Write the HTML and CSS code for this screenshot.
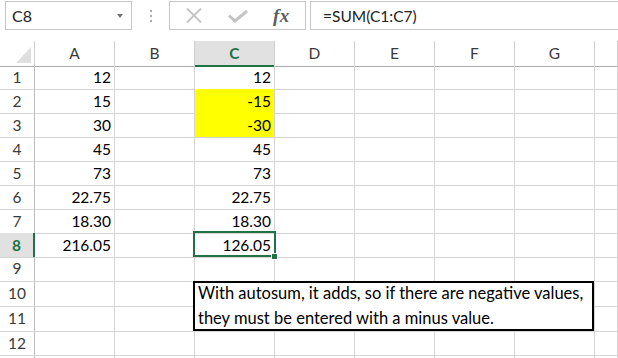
FILE: index.html
```html
<!DOCTYPE html>
<html>
<head>
<meta charset="utf-8">
<link rel="stylesheet" href="styles.css">
</head>
<body>
<div class="app">
  <div class="fbar">
    <div class="namebox"><span class="nb-text">C8</span><span class="nb-arrow"></span></div>
    <div class="grip"><i></i><i></i><i></i></div>
    <div class="fxbox">
      <svg class="ic-x" width="16" height="15" viewBox="0 0 16 15"><path d="M1 0.5 L15 14.5 M15 0.5 L1 14.5" stroke="#c3c3c3" stroke-width="1.8" fill="none"/></svg>
      <svg class="ic-ok" width="20" height="13" viewBox="0 0 20 13"><path d="M1 5.5 L7 11 L19 1" stroke="#c3c3c3" stroke-width="3" fill="none"/></svg>
      <span class="fx">fx</span>
    </div>
    <div class="finput">=SUM(C1:C7)</div>
  </div>

  <div class="sheet">
    <div class="row hdr">
      <div class="c corner"><svg width="15" height="16" viewBox="0 0 15 16"><polygon points="0,16 15,16 15,0" fill="#dfdfdf"/></svg></div>
      <div class="c">A</div><div class="c">B</div><div class="c sel">C</div><div class="c">D</div><div class="c">E</div><div class="c">F</div><div class="c">G</div><div class="c"></div>
    </div>
    <div class="row">
      <div class="c rh">1</div><div class="c n">12</div><div class="c"></div><div class="c n">12</div><div class="c"></div><div class="c"></div><div class="c"></div><div class="c"></div><div class="c"></div>
    </div>
    <div class="row">
      <div class="c rh">2</div><div class="c n">15</div><div class="c"></div><div class="c n yel yel-top">-15</div><div class="c"></div><div class="c"></div><div class="c"></div><div class="c"></div><div class="c"></div>
    </div>
    <div class="row">
      <div class="c rh">3</div><div class="c n">30</div><div class="c"></div><div class="c n yel">-30</div><div class="c"></div><div class="c"></div><div class="c"></div><div class="c"></div><div class="c"></div>
    </div>
    <div class="row">
      <div class="c rh">4</div><div class="c n">45</div><div class="c"></div><div class="c n">45</div><div class="c"></div><div class="c"></div><div class="c"></div><div class="c"></div><div class="c"></div>
    </div>
    <div class="row">
      <div class="c rh">5</div><div class="c n">73</div><div class="c"></div><div class="c n">73</div><div class="c"></div><div class="c"></div><div class="c"></div><div class="c"></div><div class="c"></div>
    </div>
    <div class="row">
      <div class="c rh">6</div><div class="c n">22.75</div><div class="c"></div><div class="c n">22.75</div><div class="c"></div><div class="c"></div><div class="c"></div><div class="c"></div><div class="c"></div>
    </div>
    <div class="row">
      <div class="c rh">7</div><div class="c n">18.30</div><div class="c"></div><div class="c n">18.30</div><div class="c"></div><div class="c"></div><div class="c"></div><div class="c"></div><div class="c"></div>
    </div>
    <div class="row">
      <div class="c rh rh-sel">8</div><div class="c n">216.05</div><div class="c"></div><div class="c n">126.05</div><div class="c"></div><div class="c"></div><div class="c"></div><div class="c"></div><div class="c"></div>
    </div>
    <div class="row tall">
      <div class="c rh">9</div><div class="c"></div><div class="c"></div><div class="c"></div><div class="c"></div><div class="c"></div><div class="c"></div><div class="c"></div><div class="c"></div>
    </div>
    <div class="row tall">
      <div class="c rh">10</div><div class="c"></div><div class="c"></div><div class="c"></div><div class="c"></div><div class="c"></div><div class="c"></div><div class="c"></div><div class="c"></div>
    </div>
    <div class="row tall">
      <div class="c rh">11</div><div class="c"></div><div class="c"></div><div class="c"></div><div class="c"></div><div class="c"></div><div class="c"></div><div class="c"></div><div class="c"></div>
    </div>
    <div class="row low">
      <div class="c rh">12</div><div class="c"></div><div class="c"></div><div class="c"></div><div class="c"></div><div class="c"></div><div class="c"></div><div class="c"></div><div class="c"></div>
    </div>
    <div class="row">
      <div class="c rh"></div><div class="c"></div><div class="c"></div><div class="c"></div><div class="c"></div><div class="c"></div><div class="c"></div><div class="c"></div><div class="c"></div>
    </div>

    <div class="selection"></div>
    <div class="handle"></div>
    <div class="note"><div class="note-text">With autosum, it adds, so if there are negative values,<br>they must be entered with a minus value.</div></div>
  </div>
</div>
</body>
</html>
```

FILE: styles.css
```css
html, body {
  margin: 0;
  padding: 0;
  background: #ffffff;
}
.app {
  width: 618px;
  height: 358px;
  overflow: hidden;
  font-family: Lato, "Open Sans", sans-serif;
  font-size: 15.5px;
  color: #000;
}
.fbar {
  display: flex;
  height: 31px;
  align-items: flex-start;
}
.namebox {
  margin-top: 1px;
  margin-left: 5px;
  width: 127px;
  height: 29px;
  box-sizing: border-box;
  border: 1px solid #c6c6c6;
  display: flex;
  align-items: center;
  padding-left: 6px;
  font-size: 16px;
  color: #222;
}
.nb-arrow {
  margin-left: auto;
  margin-right: 8px;
  width: 0;
  height: 0;
  border-left: 3.5px solid transparent;
  border-right: 3.5px solid transparent;
  border-top: 4px solid #707070;
}
.grip {
  width: 37px;
  height: 31px;
  display: flex;
  flex-direction: column;
  align-items: center;
  justify-content: center;
  gap: 3px;
}
.grip i {
  display: block;
  width: 2px;
  height: 2px;
  background: #a8a8a8;
}
.fxbox {
  margin-top: 1px;
  width: 137px;
  height: 29px;
  box-sizing: border-box;
  border: 1px solid #c6c6c6;
  display: flex;
  align-items: center;
  padding-left: 16px;
}
.ic-ok { margin-left: 26px; margin-top: 2px; }
.fx {
  margin-left: 25px;
  font-family: "Liberation Serif", serif;
  font-style: italic;
  font-weight: bold;
  font-size: 19px;
  color: #5e5e5e;
  letter-spacing: 0.5px;
}
.finput {
  margin-top: 1px;
  margin-left: 4px;
  flex: 1;
  height: 29px;
  box-sizing: border-box;
  border: 1px solid #c6c6c6;
  border-right: none;
  display: flex;
  align-items: center;
  padding-left: 12px;
  font-size: 15.5px;
  color: #222;
}

.sheet {
  position: relative;
  margin-top: 10px;
}
.row {
  display: grid;
  grid-template-columns: 35px repeat(7, 80px) 1fr;
  height: 24px;
  line-height: 24px;
}
.row.tall {
  height: 25px;
  line-height: 22px;
}
.row.low {
  line-height: 22px;
}
.c {
  box-sizing: border-box;
  border-right: 1px solid #d4d4d4;
  border-bottom: 1px solid #d4d4d4;
  white-space: nowrap;
}
.hdr .c {
  text-align: center;
  color: #3a3a3a;
  border-right-color: #cfcfcf;
  border-bottom-color: #ababab;
}
.hdr .c.sel {
  background: #e1e1e1;
  color: #217346;
  font-weight: bold;
  border-bottom: 2px solid #217346;
}
.hdr .corner {
  display: flex;
  justify-content: flex-end;
  align-items: flex-end;
  padding: 0 3px 3px 0;
}
.rh {
  text-align: center;
  color: #3a3a3a;
  border-right-color: #bdbdbd;
}
.rh-sel {
  background: #e1e1e1;
  color: #217346;
  font-weight: bold;
  border-right: 2px solid #217346;
}
.n {
  text-align: right;
  padding-right: 3px;
}
.yel {
  background: #ffff00;
}
.yel-top {
  border-bottom-color: #ffff00;
}
.selection {
  position: absolute;
  left: 193px;
  top: 190px;
  width: 83px;
  height: 26px;
  box-sizing: border-box;
  border: 2px solid #217346;
}
.handle {
  position: absolute;
  left: 271px;
  top: 212px;
  width: 7px;
  height: 7px;
  box-sizing: border-box;
  background: #217346;
  border: 1px solid #ffffff;
}
.note {
  position: absolute;
  left: 193px;
  top: 240px;
  width: 401px;
  height: 50px;
  box-sizing: border-box;
  border: 2px solid #000;
  background: #fff;
  padding: 0 3px;
  font-size: 16.5px;
  line-height: 25px;
  white-space: nowrap;
}
.note-text {
  margin-top: -2px;
}
```
